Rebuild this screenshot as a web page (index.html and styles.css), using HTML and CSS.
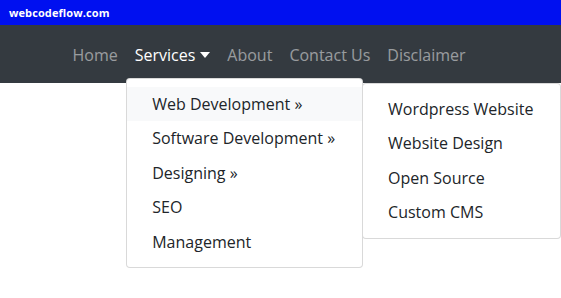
FILE: index.html
```html
<!DOCTYPE html>
<html>
<head>
<meta charset="utf-8">
<link rel="stylesheet" href="styles.css">
</head>
<body>
<div class="topbar">webcodeflow.com</div>
<nav class="navbar">
  <ul class="nav">
    <li><a class="nav-link">Home</a></li>
    <li class="has-dropdown">
      <a class="nav-link active">Services<span class="caret"></span></a>
      <ul class="dropdown">
        <li class="has-sub">
          <a class="dropdown-item hover">Web Development &raquo;</a>
          <ul class="dropdown submenu">
            <li><a class="dropdown-item">Wordpress Website</a></li>
            <li><a class="dropdown-item">Website Design</a></li>
            <li><a class="dropdown-item">Open Source</a></li>
            <li><a class="dropdown-item">Custom CMS</a></li>
          </ul>
        </li>
        <li><a class="dropdown-item">Software Development &raquo;</a></li>
        <li><a class="dropdown-item">Designing &raquo;</a></li>
        <li><a class="dropdown-item">SEO</a></li>
        <li><a class="dropdown-item">Management</a></li>
      </ul>
    </li>
    <li><a class="nav-link">About</a></li>
    <li><a class="nav-link">Contact Us</a></li>
    <li><a class="nav-link">Disclaimer</a></li>
  </ul>
</nav>
</body>
</html>
```
FILE: styles.css
```css
* { box-sizing: border-box; }
body { margin: 0; padding: 0; min-height: 298px; background: #fff; font-family: "Open Sans", "Noto Sans", sans-serif; color: #212529; }
.topbar {
  height: 25px;
  background: #0010f0;
  color: #fff;
  font-family: "Open Sans", sans-serif;
  font-weight: 700;
  font-size: 11px;
  line-height: 25px;
  letter-spacing: 0.1px;
  padding-left: 9px;
}
.navbar {
  height: 58px;
  background: #343a40;
  display: flex;
  align-items: center;
  padding-left: 64px;
}
.nav { list-style: none; margin: 0; padding: 0; display: flex; }
.nav > li { position: relative; }
.nav-link {
  display: block;
  padding: 9px 8.5px 7px;
  font-size: 16px;
  line-height: 26px;
  color: rgba(255,255,255,.5);
}
.nav-link.active { color: #fff; }
.caret {
  display: inline-block;
  margin-left: 5px;
  vertical-align: 3px;
  border-top: 6px solid #fff;
  border-left: 5px solid transparent;
  border-right: 5px solid transparent;
}
.dropdown {
  position: absolute;
  z-index: 10;
  list-style: none;
  margin: 0;
  padding: 8px 0;
  background: #fff;
  border: 1px solid rgba(0,0,0,.15);
  border-radius: 4px;
  white-space: nowrap;
  top: 45px;
  left: 0;
}
.has-sub { position: relative; }
.submenu { top: -4px; left: 100%; }
.dropdown-item {
  display: block;
  padding: 4px 27px 4px 25px;
  font-size: 16px;
  line-height: 26.4px;
  color: #212529;
}
.dropdown-item.hover { background: #f8f9fa; }
```
